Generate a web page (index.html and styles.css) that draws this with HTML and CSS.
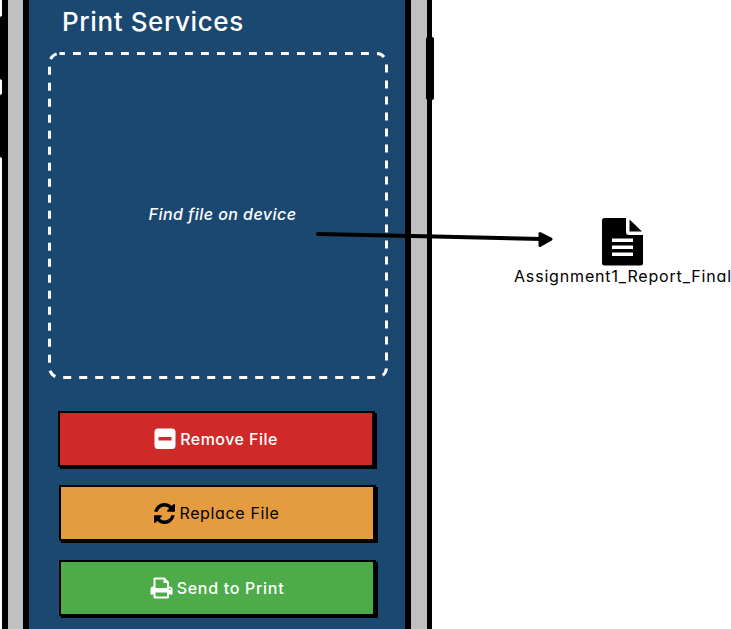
FILE: index.html
```html
<!DOCTYPE html>
<html lang="en">
<head>
<meta charset="utf-8">
<title>Print Services</title>
<link rel="stylesheet" href="styles.css">
</head>
<body>
<main class="canvas">
  <section class="phone">
    <i class="key key-up"></i><i class="key key-down"></i><i class="key key-power"></i>
    <div class="screen">
      <h1 class="title">Print Services</h1>
      <div class="drop">
        <svg class="dashes" width="342" height="329" viewBox="0 0 342 329"><path d="M12.500 2.500H329.500A10 10 0 0 1 339.500 12.500V316.500A10 10 0 0 1 329.500 326.500H12.500A10 10 0 0 1 2.500 316.500V12.500A10 10 0 0 1 12.500 2.500"/></svg>
        <span class="hint">Find file on device</span>
      </div>
      <div class="actions">
        <button class="btn remove"><svg width="22" height="22" viewBox="0 0 22 22"><path fill="currentColor" fill-rule="evenodd" d="M4 .5H18Q21.500 .5 21.500 4V17.500Q21.500 21 18 21H4Q.5 21 .5 17.500V4Q.5 .5 4 .5ZM4.500 9V12.500H17.500V9Z"/></svg><span>Remove File</span></button>
        <button class="btn replace"><svg width="21" height="21" viewBox="0 0 1536 1536"><path fill="currentColor" d="M1511 928q0 5-1 7-64 268-268 434.500T764 1536q-146 0-282.500-55T238 1324l-129 129q-19 19-45 19t-45-19-19-45V960q0-26 19-45t45-19h448q26 0 45 19t19 45-19 45l-137 137q71 66 161 102t187 36q134 0 250-65t186-179q11-17 53-117 8-23 30-23h192q13 0 22.500 9.500t9.500 22.500zm25-800v448q0 26-19 45t-45 19h-448q-26 0-45-19t-19-45 19-45l138-138Q969 256 768 256q-134 0-250 65T332 500q-11 17-53 117-8 23-30 23H50q-13 0-22.500-9.500T18 608v-7q65-268 270-434.500T768 0q146 0 284 55.500T1297 212l130-129q19-19 45-19t45 19 19 45z"/></svg><span>Replace File</span></button>
        <button class="btn send"><svg width="23" height="22" viewBox="0 0 23 22"><path fill="currentColor" fill-rule="evenodd" d="M3.500 9.500V1.500Q3.500 .5 4.500 .5H14.500L19 5V9.500Q22.500 9.500 22.500 12V17.500H19V20Q19 21.500 18 21.500H5Q3.500 21.500 3.500 20V17.500H.5V12Q.5 9.500 3.500 9.500ZM5.500 2.500V11H17V6H13.500V2.500ZM5.500 15.500V19.500H17V15.500ZM19 11.500V13H20.500V11.500Z"/></svg><span>Send to Print</span></button>
      </div>
    </div>
  </section>
  <figure class="file">
    <svg width="42" height="48" viewBox="0 0 42 48"><path fill-rule="evenodd" d="M2.500 0H24V14Q24 17 27 17H41V45Q41 47.500 38.500 47.500H2.500Q0 47.500 0 45V2.500Q0 0 2.500 0ZM10 20.500V24H31V20.500ZM10 27.500V31H31V27.500ZM10 34.500V38H31V34.500Z"/><path d="M27.500 1.500L40 13.500H27.500Z"/></svg>
    <figcaption>Assignment1_Report_Final</figcaption>
  </figure>
  <svg class="arrow" width="240" height="24" viewBox="0 0 240 24"><path class="shaft" d="M4 8L110 10.200L228 13"/><path class="head" d="M226 7.500L237 13.200L226 19.500Z"/></svg>
</main>
</body>
</html>
```
FILE: styles.css
```css
* { box-sizing: border-box; }
body { margin: 0; background: #fff; font-family: Inter, "Liberation Sans", sans-serif; font-feature-settings: "cv11"; }
.canvas { position: relative; display: flex; width: 731px; height: 629px; overflow: hidden; }
.phone {
  position: relative;
  flex: none;
  width: 430px;
  margin-left: 2px;
  padding: 0 16px 0 15px;
  background: #c0c0c0;
  border: solid #000;
  border-width: 0 5px 0 6px;
}
.screen {
  height: 629px;
  width: 388px;
  padding: 8px 17px 0 18px;
  background: #1b4871;
  border: solid #000;
  border-width: 0 6px;
}
.key { position: absolute; width: 8px; background: #000; border-radius: 2px; }
.key-up { left: -8px; top: 16px; height: 64px; }
.key-down { left: -8px; top: 94px; height: 64px; }
.key-power { right: -7px; top: 37px; height: 63px; }
.title {
  margin: 0 0 0 15px;
  height: 43px;
  color: #fff;
  font-size: 26px;
  font-weight: 500;
  line-height: 28px;
  letter-spacing: .6px;
  white-space: nowrap;
}
.drop { position: relative; display: flex; justify-content: center; width: 342px; height: 329px; }
.dashes { position: absolute; inset: 0; fill: none; stroke: #fff; stroke-width: 3; stroke-dasharray: 8 8; stroke-dashoffset: 2.5; }
.hint { margin: 153px 0 0 9px; color: #fff; font-size: 16px; font-style: italic; font-weight: 500; line-height: 20px; letter-spacing: .45px; }
.actions { display: flex; flex-direction: column; gap: 18.5px; margin: 30.5px 0 0 12px; width: 317px; }
.btn {
  display: flex;
  align-items: center;
  justify-content: center;
  gap: 4px;
  width: 317px;
  height: 56px;
  padding: 0;
  border: 2px solid #000;
  border-right-width: 3px;
  box-shadow: 2px 2px 0 #000;
  color: #fff;
  font: 500 16px/20px Inter, sans-serif;
  font-feature-settings: "cv11";
  letter-spacing: .45px;
}
.remove { margin-left: -1px; background: #cf2a28; }
.replace { background: #e59b40; color: #000; font-weight: 400; letter-spacing: .65px; }
.send { background: #4dac49; letter-spacing: .7px; }
.file { display: flex; flex-direction: column; align-items: center; width: 218px; margin: 218px 0 0 82px; }
.file figcaption { font-size: 16px; line-height: 20px; letter-spacing: .83px; white-space: nowrap; }
.arrow { position: absolute; left: 314px; top: 226px; }
.shaft { fill: none; stroke: #000; stroke-width: 4; stroke-linecap: round; }
.head { stroke: #000; stroke-width: 3; stroke-linejoin: round; }
```
